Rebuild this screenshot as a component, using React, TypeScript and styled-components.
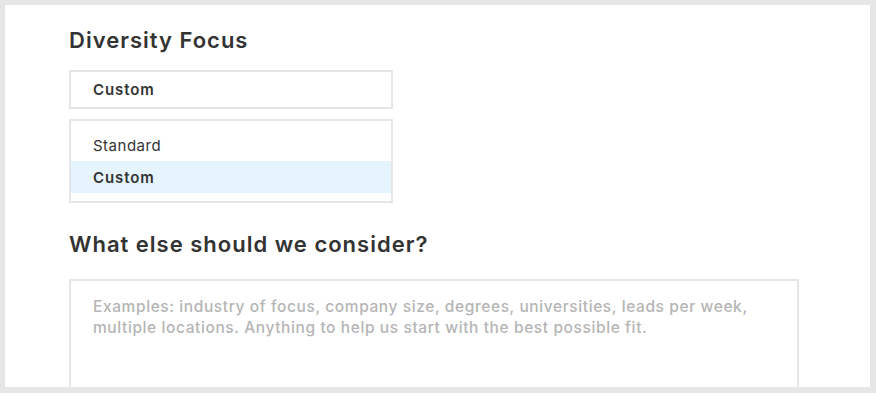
import React from "react";
import styled, { createGlobalStyle } from "styled-components";

const GlobalStyle = createGlobalStyle`
  html, body {
    margin: 0;
    padding: 0;
    background: #ffffff;
  }
  body {
    font-family: Inter, "Noto Sans", sans-serif;
    color: #333333;
  }
`;

const options = ["Standard", "Custom"];

export default function App() {
  const selected = "Custom";

  return (
    <>
      <GlobalStyle />
      <Frame>
        <Panel>
          <Heading>Diversity Focus</Heading>
          <SelectBox>{selected}</SelectBox>
          <OptionList>
            {options.map((option) => (
              <OptionItem key={option} $active={option === selected}>
                {option}
              </OptionItem>
            ))}
          </OptionList>
          <Heading $spaced>What else should we consider?</Heading>
          <NotesBox
            placeholder="Examples: industry of focus, company size, degrees, universities, leads per week, multiple locations. Anything to help us start with the best possible fit."
          />
        </Panel>
      </Frame>
    </>
  );
}

const Frame = styled.div`
  background: #e6e6e6;
  height: 393px;
  padding: 5px 6px 6px 5px;
  box-sizing: border-box;
`;

const Panel = styled.div`
  background: #ffffff;
  height: 100%;
  overflow: hidden;
  padding: 21px 0 0 64px;
  box-sizing: border-box;
`;

const Heading = styled.h2<{ $spaced?: boolean }>`
  margin: ${(p) => (p.$spaced ? "27px 0 21px" : "0 0 16px")};
  font-size: 22px;
  line-height: 28px;
  font-weight: 600;
  color: #333333;
  letter-spacing: 1px;
`;

const SelectBox = styled.div`
  width: 324px;
  height: 39px;
  box-sizing: border-box;
  border: 2px solid #e6e6e6;
  padding: 0 22px;
  display: flex;
  align-items: center;
  font-size: 15px;
  font-weight: 600;
  letter-spacing: 0.9px;
  color: #333333;
`;

const OptionList = styled.div`
  width: 324px;
  margin-top: 10px;
  box-sizing: border-box;
  border: 2px solid #e6e6e6;
  padding: 8px 0;
`;

const OptionItem = styled.div<{ $active?: boolean }>`
  height: 32px;
  display: flex;
  align-items: center;
  padding: 0 22px;
  font-size: 15px;
  font-weight: ${(p) => (p.$active ? 600 : 400)};
  letter-spacing: ${(p) => (p.$active ? "0.9px" : "0.5px")};
  background: ${(p) => (p.$active ? "#e6f5fd" : "transparent")};
  color: #333333;
`;

const NotesBox = styled.textarea`
  display: block;
  width: 730px;
  height: 140px;
  box-sizing: border-box;
  border: 2px solid #e6e6e6;
  padding: 15px 22px;
  resize: none;
  outline: none;
  font-family: Inter, "Noto Sans", sans-serif;
  font-size: 15.5px;
  line-height: 21px;
  font-weight: 500;
  letter-spacing: 0.6px;
  color: #333333;
  &::placeholder {
    color: #b5b5b5;
  }
`;
